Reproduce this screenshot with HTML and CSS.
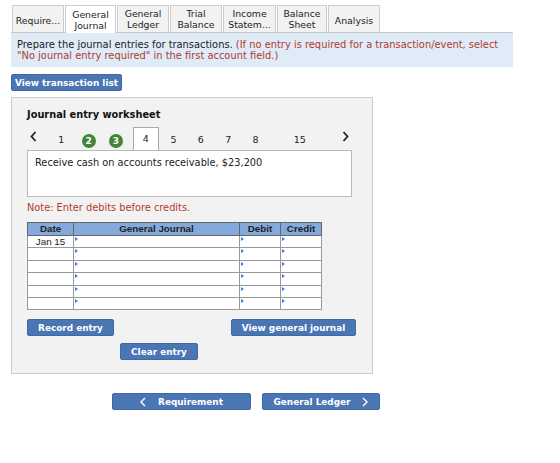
FILE: index.html
```html
<!DOCTYPE html>
<html lang="en">
<head>
    <meta charset="UTF-8">
    <meta name="viewport" content="width=device-width, initial-scale=1.0">
    <title>Journal Entry Worksheet</title>
    <link rel="stylesheet" href="styles.css">
</head>
<body>
    <div class="page">
        <div class="tabs">
            <div class="tab single">Require...</div>
            <div class="tab active">General<br>Journal</div>
            <div class="tab">General<br>Ledger</div>
            <div class="tab">Trial<br>Balance</div>
            <div class="tab">Income<br>Statem...</div>
            <div class="tab">Balance<br>Sheet</div>
            <div class="tab single">Analysis</div>
        </div>

        <div class="instructions">
            Prepare the journal entries for transactions. <span class="red">(If no entry is required for a transaction/event, select</span><br>
            <span class="red">"No journal entry required" in the first account field.)</span>
        </div>

        <button class="btn btn-list">View transaction list</button>

        <div class="worksheet">
            <h3>Journal entry worksheet</h3>

            <div class="steps">
                <span class="arrow">
                    <svg width="7" height="11" viewBox="0 0 7 11"><polyline points="5.5,1 1.5,5.5 5.5,10" fill="none" stroke="#222" stroke-width="1.8"/></svg>
                </span>
                <span class="step first">1</span>
                <span class="step"><span class="done">2</span></span>
                <span class="step"><span class="done">3</span></span>
                <span class="step current">4</span>
                <span class="step">5</span>
                <span class="step">6</span>
                <span class="step">7</span>
                <span class="step">8</span>
                <span class="step last">15</span>
                <span class="arrow next">
                    <svg width="7" height="11" viewBox="0 0 7 11"><polyline points="1.5,1 5.5,5.5 1.5,10" fill="none" stroke="#222" stroke-width="1.8"/></svg>
                </span>
            </div>

            <div class="desc">Receive cash on accounts receivable, $23,200</div>

            <p class="note">Note: Enter debits before credits.</p>

            <table class="journal">
                <thead>
                    <tr>
                        <th class="c-date">Date</th>
                        <th class="c-acct">General Journal</th>
                        <th class="c-amt">Debit</th>
                        <th class="c-amt">Credit</th>
                    </tr>
                </thead>
                <tbody>
                    <tr><td>Jan 15</td><td class="mark"></td><td class="mark"></td><td class="mark"></td></tr>
                    <tr><td></td><td class="mark"></td><td class="mark"></td><td class="mark"></td></tr>
                    <tr><td></td><td class="mark"></td><td class="mark"></td><td class="mark"></td></tr>
                    <tr><td></td><td class="mark"></td><td class="mark"></td><td class="mark"></td></tr>
                    <tr><td></td><td class="mark"></td><td class="mark"></td><td class="mark"></td></tr>
                    <tr><td></td><td class="mark"></td><td class="mark"></td><td class="mark"></td></tr>
                </tbody>
            </table>

            <div class="actions">
                <button class="btn btn-record">Record entry</button>
                <button class="btn btn-view">View general journal</button>
            </div>
            <div class="actions-center">
                <button class="btn btn-clear">Clear entry</button>
            </div>
        </div>

        <div class="nav">
            <button class="btn btn-prev">
                <svg class="chev" width="6" height="10" viewBox="0 0 6 10"><polyline points="5,1 1,5 5,9" fill="none" stroke="#fff" stroke-width="1.4"/></svg>
                Requirement
            </button>
            <button class="btn btn-next">
                General Ledger
                <svg class="chev" width="6" height="10" viewBox="0 0 6 10"><polyline points="1,1 5,5 1,9" fill="none" stroke="#fff" stroke-width="1.4"/></svg>
            </button>
        </div>
    </div>
</body>
</html>
```

FILE: styles.css
```css
body {
    margin: 0;
    background: #fff;
    font-family: "DejaVu Sans", Verdana, sans-serif;
    color: #222;
}
.page {
    padding: 5px 0 0 11px;
}
.tabs {
    display: flex;
    padding-left: 1px;
}
.tab {
    box-sizing: border-box;
    height: 27px;
    margin-right: 1px;
    padding: 0;
    background: #f2f2f2;
    border: 1px solid #ccc;
    border-bottom: none;
    font-size: 9.3px;
    line-height: 11px;
    text-align: center;
    display: flex;
    align-items: center;
    justify-content: center;
    color: #222;
    white-space: nowrap;
}
.tab.single {
    padding-top: 2px;
}
.tab.active {
    background: #fff;
    height: 28px;
    margin-bottom: -1px;
    position: relative;
}
.tab:nth-child(1) { width: 52px; }
.tab:nth-child(2) { width: 51px; }
.tab:nth-child(3) { width: 52px; }
.tab:nth-child(4) { width: 52px; }
.tab:nth-child(5) { width: 53px; }
.tab:nth-child(6) { width: 50px; }
.tab:nth-child(7) { width: 52px; }
.instructions {
    width: 490px;
    background: #dfebf7;
    border-top: 1px solid #c8c8c8;
    padding: 6px 6px;
    font-size: 9.9px;
    line-height: 11px;
    color: #222;
    white-space: nowrap;
}
.red {
    color: #b23a2e;
}
.btn {
    font-family: "DejaVu Sans", Verdana, sans-serif;
    font-weight: bold;
    font-size: 8.9px;
    color: #fff;
    background: #4a76b4;
    border: 1px solid #3f69a6;
    border-radius: 2px;
    height: 17px;
    padding: 0;
    cursor: pointer;
}
.btn-list {
    margin-top: 7px;
    width: 111px;
    display: block;
}
.worksheet {
    margin-top: 6px;
    width: 325px;
    height: 275px;
    background: #f2f2f2;
    border: 1px solid #cdcdcd;
    padding: 0 20px 0 15px;
}
.worksheet h3 {
    margin: 11px 0 0;
    font-size: 9.8px;
    line-height: 12px;
    font-weight: bold;
    color: #111;
}
.steps {
    display: flex;
    align-items: flex-end;
    margin-top: 7px;
    height: 22px;
    font-size: 9.5px;
    position: relative;
    z-index: 1;
}
.steps .arrow {
    width: 14px;
    height: 21px;
    display: flex;
    justify-content: center;
    align-items: center;
    margin-bottom: 3px;
}
.steps .arrow.next {
    margin-left: 25px;
}
.step {
    width: 28px;
    height: 21px;
    text-align: center;
    line-height: 21px;
}
.step.first {
    margin-left: 7px;
}
.step.last {
    margin-left: 17px;
}
.step.current {
    width: 25px;
    margin: 0 1px 0 3px;
    background: #fff;
    border: 1px solid #a9a9a9;
    border-bottom: none;
    height: 22px;
    line-height: 22px;
}
.done {
    display: inline-block;
    width: 14px;
    height: 14px;
    border-radius: 50%;
    background: #458537;
    color: #fff;
    font-weight: bold;
    font-size: 9px;
    line-height: 14px;
    vertical-align: middle;
}
.desc {
    background: #fff;
    border: 1px solid #b9b9b9;
    height: 45px;
    padding: 0 7px;
    font-size: 9.8px;
    line-height: 24px;
}
.note {
    margin: 5px 0 0;
    font-size: 9.8px;
    line-height: 11px;
    color: #b23a2e;
}
.journal {
    margin-top: 9px;
    border-collapse: collapse;
    font-family: "Liberation Sans", Arial, sans-serif;
    font-size: 9.8px;
    background: #fff;
    border: 1px solid #666;
}
.journal th {
    background: #84aadd;
    border: 1px solid #666;
    height: 12px;
    padding: 0;
    line-height: 12px;
    font-weight: bold;
    color: #222;
}
.journal td {
    border: 1px solid #999;
    height: 11.4px;
    padding: 0;
    line-height: 11px;
    text-align: center;
    position: relative;
}
.journal td.mark::before {
    content: "";
    position: absolute;
    left: 1px;
    top: 1px;
    border-left: 3px solid #3d7fd6;
    border-top: 2px solid transparent;
    border-bottom: 2px solid transparent;
}
.c-date { width: 45px; }
.c-acct { width: 165px; }
.c-amt { width: 40px; }
.actions {
    display: flex;
    justify-content: space-between;
    margin-top: 9px;
    width: 329px;
}
.btn-record { width: 87px; }
.btn-view { width: 125px; }
.actions-center {
    display: flex;
    margin-top: 7px;
    padding-left: 93px;
}
.btn-clear { width: 78px; }
.nav {
    display: flex;
    gap: 11px;
    margin-top: 19px;
    padding-left: 101px;
}
.btn-prev { width: 139px; }
.btn-next { width: 118px; }
.btn-prev, .btn-next {
    display: flex;
    align-items: center;
    justify-content: center;
}
.btn-prev .chev { margin-right: 12px; }
.btn-next .chev { margin-left: 12px; }
```
